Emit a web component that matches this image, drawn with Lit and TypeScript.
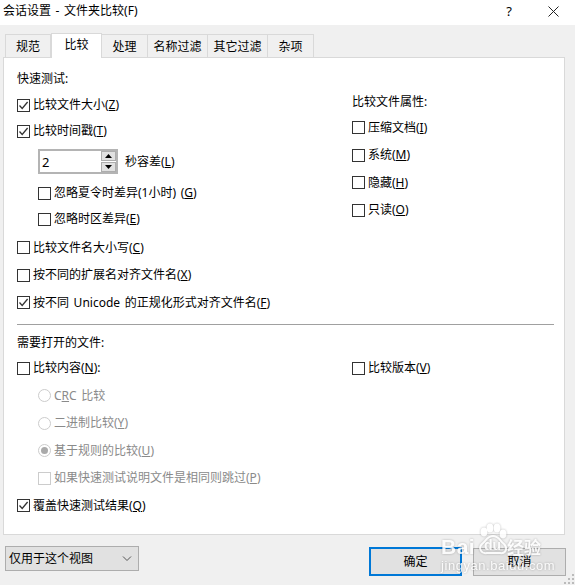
import { LitElement, html, css, nothing } from 'lit';
import { customElement } from 'lit/decorators.js';

const tabs = ['规范', '比较', '处理', '名称过滤', '其它过滤', '杂项'];

@customElement('app-root')
export class AppRoot extends LitElement {
  static styles = css`
    :host {
      display: block;
      position: relative;
      width: 575px;
      height: 585px;
      overflow: hidden;
      background: #f0f0f0;
      color: #000;
      font: 12px/16px "Noto Sans", "Noto Sans CJK SC", sans-serif;
      word-spacing: 1.5px;
    }
    .title {
      display: flex;
      align-items: center;
      height: 25px;
      padding: 0 0 3px 3px;
      box-sizing: border-box;
      background: #fff;
    }
    .title .name { flex: 1; }
    .title .help { width: 10px; margin-right: 34px; text-align: center; font-size: 13px; }
    .title svg { margin-right: 16px; }

    .tabs {
      display: flex;
      align-items: flex-end;
      height: 33px;
      padding: 8px 0 0 5px;
      box-sizing: border-box;
      position: relative;
      z-index: 1;
      margin-bottom: -1px;
    }
    .tab {
      height: 23px;
      box-sizing: border-box;
      border: 1px solid #d9d9d9;
      border-bottom: none;
      border-left: none;
      line-height: 24px;
      text-align: center;
      background: #f0f0f0;
      margin-bottom: 1px;
    }
    .tab:first-child { border-left: 1px solid #d9d9d9; }
    .tab.active {
      height: 25px;
      background: #fff;
      margin-bottom: 0;
      border-left: 1px solid #d9d9d9;
      line-height: 22px;
      padding-bottom: 2px;
    }
    .panel {
      margin-left: 3px;
      width: 562px;
      height: 478px;
      box-sizing: border-box;
      border: 1px solid #d9d9d9;
      background: #fff;
      padding: 8px 10px 0 13px;
    }
    .split { display: flex; }
    .left { width: 335px; flex: none; }
    .right-top { padding-top: 24px; }
    .row { display: flex; align-items: center; height: 26px; }
    .row.wide { height: 27.5px; }
    .row.head { height: 24px; }
    .row.head.short { height: 23.5px; }
    .row.indent { padding-left: 21px; }
    .gap { margin-top: 2px; }
    .box {
      flex: none;
      width: 13px;
      height: 13px;
      box-sizing: border-box;
      border: 1px solid #333;
      margin-right: 3px;
      background: #fff;
      display: flex;
    }
    .box.off { border-color: #ccc; }
    .radio {
      flex: none;
      width: 13px;
      height: 13px;
      box-sizing: border-box;
      border: 1px solid #ccc;
      border-radius: 50%;
      margin-right: 3px;
      display: flex;
      align-items: center;
      justify-content: center;
    }
    .radio i { width: 7px; height: 7px; border-radius: 50%; background: #aaa; }
    .dim { color: #8a8a8a; }

    .spin-row {
      display: flex;
      align-items: center;
      height: 25px;
      margin: 5px 0 6px 21px;
    }
    .spin {
      width: 80px;
      height: 25px;
      box-sizing: border-box;
      border: 2px solid #b4b4b4;
      display: flex;
      align-items: center;
      padding-left: 2px;
      margin-right: 7px;
      background: #fff;
    }
    .spin span { flex: 1; font-size: 13px; }
    .arrows { display: flex; flex-direction: column; width: 15px; height: 21px; gap: 1px; }
    .arrows div {
      flex: 1;
      border: 1px solid #adadad;
      background: #e1e1e1;
      display: flex;
      align-items: center;
      justify-content: center;
    }
    hr {
      margin: 7px 0 6.5px;
      border: none;
      height: 1px;
      background: #a0a0a0;
    }
    .foot {
      display: flex;
      padding: 11px 9px 0 5px;
      align-items: flex-start;
    }
    .combo {
      width: 134px;
      height: 25px;
      box-sizing: border-box;
      border: 1px solid #adadad;
      background: #e1e1e1;
      display: flex;
      align-items: center;
      justify-content: space-between;
      padding: 0 6px 0 3px;
      margin-right: 230px;
    }
    .btn {
      width: 93px;
      height: 28px;
      box-sizing: border-box;
      border: 1px solid #adadad;
      background: #e1e1e1;
      display: flex;
      align-items: center;
      justify-content: center;
      margin-top: 2px;
    }
    .btn.primary { height: 29px; border: 2px solid #0078d7; margin: 1px 11px 0 0; }
    .grip {
      position: absolute;
      right: 1px;
      bottom: 1px;
      width: 10px;
      height: 10px;
    }
    .mark {
      position: absolute;
      left: 441px;
      top: 523px;
      width: 104px;
      height: 50px;
      color: #fff;
      opacity: 0.85;
      filter: drop-shadow(0 0 1px rgba(0, 0, 0, 0.3));
      pointer-events: none;
      word-spacing: normal;
    }
    .mark svg { position: absolute; left: 34px; top: 0; }
    .mark .bai {
      position: absolute;
      left: 0;
      top: 12px;
      font: bold 21px/24px "Liberation Sans", sans-serif;
      letter-spacing: 0.5px;
    }
    .mark .jy {
      position: absolute;
      left: 66px;
      top: 13px;
      font: bold 17px/22px "Noto Sans CJK SC", sans-serif;
    }
    .mark .url {
      position: absolute;
      left: 0;
      top: 35px;
      font: 13px/16px "Liberation Sans", sans-serif;
      letter-spacing: 0.55px;
      white-space: nowrap;
    }
  `;

  private label(pre: string, key: string, post = '') {
    return html`<span>${pre}<u>${key}</u>${post}</span>`;
  }

  private check(on: boolean, disabled = false) {
    return html`<span class="box ${disabled ? 'off' : ''}">
      ${on
        ? html`<svg width="11" height="11" viewBox="0 0 11 11"><path d="M1.5 5.5 L4.2 8.5 L9.6 2" fill="none" stroke="#333" stroke-width="1.3"/></svg>`
        : nothing}
    </span>`;
  }

  private checkRow(on: boolean, pre: string, key: string, post = ')', cls = '') {
    return html`<div class="row ${cls}">${this.check(on)}${this.label(pre + '(', key, post)}</div>`;
  }

  private radioRow(on: boolean, text: unknown) {
    return html`<div class="row wide indent dim">
      <span class="radio">${on ? html`<i></i>` : nothing}</span>${text}
    </div>`;
  }

  render() {
    return html`
      <div class="title">
        <span class="name">会话设置 - 文件夹比较(F)</span>
        <span class="help">?</span>
        <svg width="11" height="11" viewBox="0 0 11 11"><path d="M.5 .5 L10.5 10.5 M10.5 .5 L.5 10.5" stroke="#222" fill="none"/></svg>
      </div>
      <div class="tabs">
        ${tabs.map(
          (t, i) => html`<div
            class="tab ${i === 1 ? 'active' : ''}"
            style="width:${[46, 51, 46, 60, 60, 46][i]}px"
          >${t}</div>`
        )}
      </div>
      <div class="panel">
        <div class="split">
          <div class="left">
            <div class="row">快速测试:</div>
            ${this.checkRow(true, '比较文件大小', 'Z')}
            ${this.checkRow(true, '比较时间戳', 'T')}
            <div class="spin-row">
              <div class="spin">
                <span>2</span>
                <div class="arrows">
                  <div><svg width="7" height="4"><path d="M3.5 0 L7 4 H0 Z" fill="#000"/></svg></div>
                  <div><svg width="7" height="4"><path d="M0 0 H7 L3.5 4 Z" fill="#000"/></svg></div>
                </div>
              </div>
              ${this.label('秒容差(', 'L', ')')}
            </div>
            ${this.checkRow(false, '忽略夏令时差异(1小时) ', 'G', ')', 'indent')}
            ${this.checkRow(false, '忽略时区差异', 'E', ')', 'indent')}
            <div class="gap"></div>
            ${this.checkRow(false, '比较文件名大小写', 'C', ')', 'wide')}
            ${this.checkRow(false, '按不同的扩展名对齐文件名', 'X', ')', 'wide')}
            ${this.checkRow(true, '按不同 Unicode 的正规化形式对齐文件名', 'F', ')', 'wide')}
          </div>
          <div class="right-top">
            <div class="row head">比较文件属性:</div>
            ${this.checkRow(false, '压缩文档', 'I', ')', 'wide')}
            ${this.checkRow(false, '系统', 'M', ')', 'wide')}
            ${this.checkRow(false, '隐藏', 'H', ')', 'wide')}
            ${this.checkRow(false, '只读', 'O', ')', 'wide')}
          </div>
        </div>
        <hr />
        <div class="row head short">需要打开的文件:</div>
        <div class="split">
          <div class="left">
            ${this.checkRow(false, '比较内容', 'N', '):', 'wide')}
            ${this.radioRow(false, html`<span>C<u>R</u>C 比较</span>`)}
            ${this.radioRow(false, this.label('二进制比较(', 'Y', ')'))}
            ${this.radioRow(true, this.label('基于规则的比较(', 'U', ')'))}
            <div class="row wide indent dim">
              ${this.check(false, true)}${this.label('如果快速测试说明文件是相同则跳过(', 'P', ')')}
            </div>
            ${this.checkRow(true, '覆盖快速测试结果', 'Q', ')', 'wide')}
          </div>
          <div>${this.checkRow(false, '比较版本', 'V', ')', 'wide')}</div>
        </div>
      </div>
      <div class="foot">
        <div class="combo">
          <span>仅用于这个视图</span>
          <svg width="10" height="6" viewBox="0 0 10 6"><path d="M1 .5 L5 4.5 L9 .5" fill="none" stroke="#555"/></svg>
        </div>
        <div class="btn primary">确定</div>
        <div class="btn">取消</div>
      </div>
      <svg class="grip" viewBox="0 0 10 10">
        <path d="M8 0h2v2H8zM4 4h2v2H4zM8 4h2v2H8zM0 8h2v2H0zM4 8h2v2H4zM8 8h2v2H8z" fill="#bbb"/>
      </svg>
      <div class="mark">
        <span class="bai">Bai</span>
        <svg width="34" height="32" viewBox="0 0 34 32">
          <g fill="#fff">
            <ellipse cx="9" cy="9" rx="3.4" ry="4.4"/>
            <ellipse cx="15" cy="5" rx="3.4" ry="4.6"/>
            <ellipse cx="22" cy="5" rx="3.4" ry="4.6"/>
            <ellipse cx="28" cy="11" rx="3.4" ry="4.4"/>
          </g>
          <path d="M18 13 C12 13 11 18 7 21 C3 25 6 31 12 30 H25 C31 31 33 25 29 21 C25 18 24 13 18 13 Z" fill="none" stroke="#fff" stroke-width="2"/>
          <text x="9" y="27" font-family="Liberation Sans" font-weight="700" font-size="14" fill="#fff">du</text>
        </svg>
        <span class="jy">经验</span>
        <span class="url">jingyan.baidu.com</span>
      </div>
    `;
  }
}
